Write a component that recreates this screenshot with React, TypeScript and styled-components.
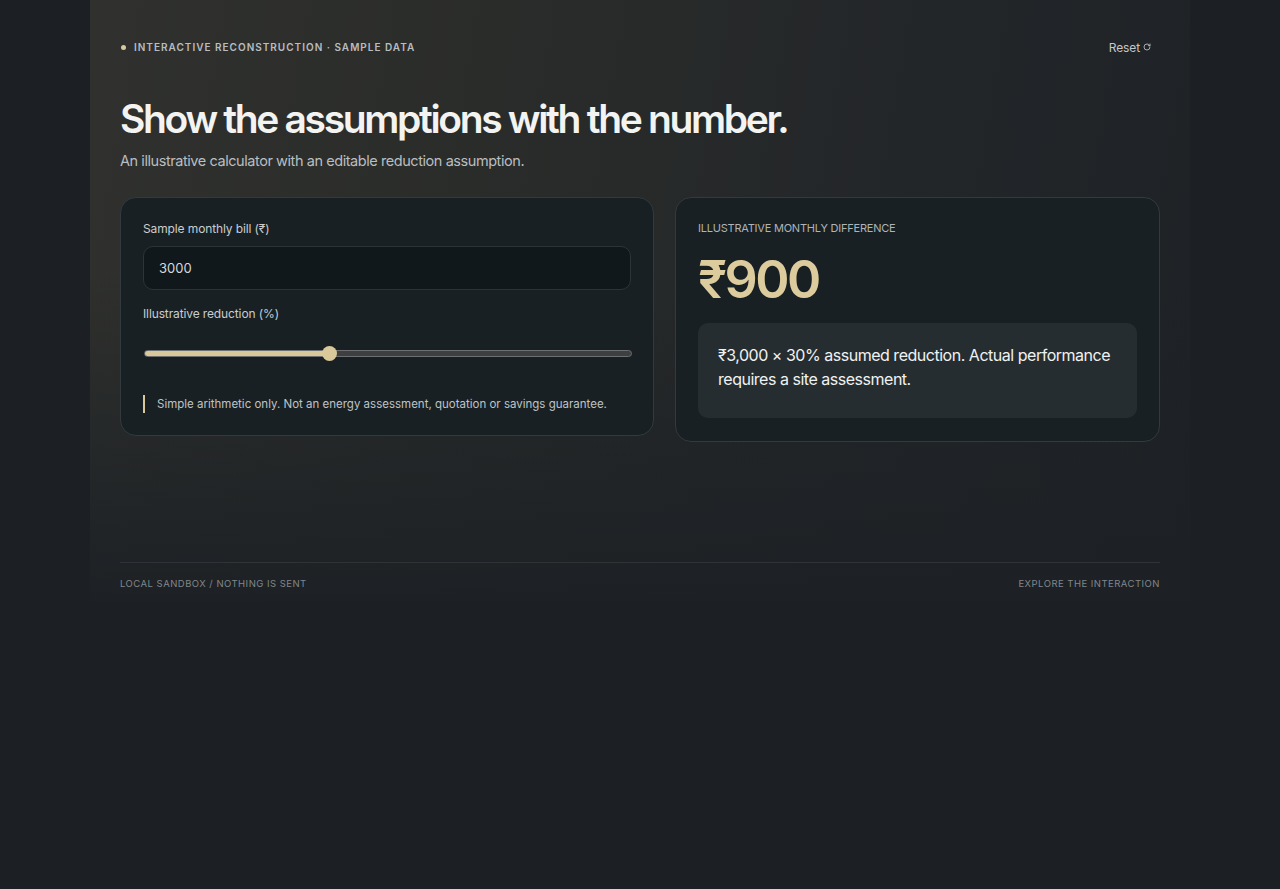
import { useState } from 'react';
import styled, { createGlobalStyle } from 'styled-components';
import { RotateCw } from 'lucide-react';

const GlobalStyles = createGlobalStyle`
  * { box-sizing: border-box; }
  html, body {
    margin: 0;
    background: #1c2024;
    font-family: Inter, "Noto Sans", sans-serif;
    color: #eef0f0;
  }
`;

const Page = styled.div`
  min-height: 889px;
  background: #1c2024;
`;

const Stage = styled.main`
  width: 1100px;
  margin-left: 90px;
  padding: 40px 30px 12px;
  background:
    linear-gradient(180deg, rgba(29, 33, 37, 0) 45%, #1d2125 100%),
    linear-gradient(100deg, #30312e 0%, #2a2c2a 35%, #232629 70%, #1e2226 100%);
  background-color: #1d2125;
`;

const TopBar = styled.header`
  display: flex;
  align-items: center;
  justify-content: space-between;
  height: 14px;
`;

const Eyebrow = styled.div`
  display: flex;
  align-items: center;
  gap: 8px;
  font-size: 10px;
  font-weight: 600;
  letter-spacing: 0.1em;
  text-transform: uppercase;
  color: #b9bdc0;
`;

const Dot = styled.span`
  width: 5px;
  height: 5px;
  margin-left: 1px;
  border-radius: 50%;
  background: #d9c99a;
`;

const ResetButton = styled.button`
  display: flex;
  align-items: center;
  gap: 3px;
  margin-right: 9px;
  padding: 0;
  border: 0;
  background: none;
  font-family: inherit;
  font-size: 12px;
  color: #c3c7ca;
  letter-spacing: -0.01em;
  cursor: pointer;
`;

const Title = styled.h1`
  margin: 41px 0 0;
  font-size: 39px;
  line-height: 48px;
  font-weight: 600;
  letter-spacing: -0.06em;
  color: #f3f3f1;
`;

const Lead = styled.p`
  margin: 8px 0 0;
  font-size: 14.5px;
  line-height: 20px;
  letter-spacing: -0.03em;
  color: #b9bec1;
`;

const Grid = styled.section`
  display: grid;
  grid-template-columns: 534px 485px;
  gap: 21px;
  align-items: start;
  margin-top: 26px;
`;

const Card = styled.div<{ $bottom: number }>`
  padding: 23px 22px ${(p) => p.$bottom}px;
  border: 1px solid #323a3d;
  border-radius: 16px;
  background: #192024;
`;

const FieldLabel = styled.label`
  display: block;
  font-size: 12px;
  line-height: 16px;
  letter-spacing: -0.01em;
  color: #c9cdcf;
`;

const NumberInput = styled.input`
  display: block;
  width: 100%;
  height: 44px;
  margin: 9px 0 16px;
  padding: 0 15px;
  border: 1px solid #2b3438;
  border-radius: 10px;
  background: #10181c;
  font-family: inherit;
  font-size: 13px;
  color: #d6dadc;
  outline: none;
`;

const Range = styled.input`
  -webkit-appearance: none;
  appearance: none;
  display: block;
  width: 488px;
  height: 7px;
  margin: 28px 0 0 1px;
  border-radius: 4px;
  border: 1px solid #6d6f70;
  outline: none;

  &::-webkit-slider-thumb {
    -webkit-appearance: none;
    width: 15px;
    height: 15px;
    border-radius: 50%;
    background: #d9c99a;
    border: 0;
    cursor: pointer;
  }
`;

const Note = styled.p`
  margin: 38px 0 0;
  padding: 1px 0 1px 12px;
  border-left: 2px solid #d9c99a;
  font-size: 11.5px;
  line-height: 16px;
  letter-spacing: 0;
  color: #bfc4c6;
`;

const ResultLabel = styled.div`
  font-size: 11px;
  line-height: 14px;
  letter-spacing: -0.02em;
  text-transform: uppercase;
  color: #aeb4b7;
`;

const Amount = styled.div`
  margin-top: 15px;
  font-size: 52px;
  line-height: 60px;
  font-weight: 600;
  letter-spacing: -0.05em;
  color: #dccb9c;
`;

const Explain = styled.div`
  margin-top: 13px;
  padding: 20px 16px 27px 20px;
  border-radius: 10px;
  background: #262d30;
  font-size: 16px;
  line-height: 24px;
  letter-spacing: -0.03em;
  color: #f0f2f2;
`;

const Footer = styled.footer`
  display: flex;
  justify-content: space-between;
  margin-top: 120px;
  padding-top: 15px;
  border-top: 1px solid #2d3337;
  font-size: 9.5px;
  letter-spacing: 0.05em;
  text-transform: uppercase;
  color: #80878b;
`;

const inr = (n: number) => '₹' + Math.round(n).toLocaleString('en-IN');

export default function App() {
  const [bill, setBill] = useState('3000');
  const [pct, setPct] = useState(30);

  const billNum = Number(bill) || 0;
  const fill = (pct / 80) * 100;

  return (
    <Page>
      <GlobalStyles />
      <Stage>
        <TopBar>
          <Eyebrow>
            <Dot />
            Interactive reconstruction · Sample data
          </Eyebrow>
          <ResetButton
            onClick={() => {
              setBill('3000');
              setPct(30);
            }}
          >
            Reset <RotateCw size={8} strokeWidth={2.5} />
          </ResetButton>
        </TopBar>

        <Title>Show the assumptions with the number.</Title>
        <Lead>An illustrative calculator with an editable reduction assumption.</Lead>

        <Grid>
          <Card $bottom={22}>
            <FieldLabel htmlFor="bill">Sample monthly bill (₹)</FieldLabel>
            <NumberInput id="bill" value={bill} onChange={(e) => setBill(e.target.value)} />
            <FieldLabel htmlFor="pct">Illustrative reduction (%)</FieldLabel>
            <Range
              id="pct"
              type="range"
              min={0}
              max={80}
              value={pct}
              onChange={(e) => setPct(Number(e.target.value))}
              style={{
                background: `linear-gradient(90deg, #d9c99a ${fill}%, #3d3f40 ${fill}%)`,
              }}
            />
            <Note>Simple arithmetic only. Not an energy assessment, quotation or savings guarantee.</Note>
          </Card>

          <Card $bottom={23}>
            <ResultLabel>Illustrative monthly difference</ResultLabel>
            <Amount>{inr((billNum * pct) / 100)}</Amount>
            <Explain>
              {inr(billNum)} × {pct}% assumed reduction. Actual performance requires a site assessment.
            </Explain>
          </Card>
        </Grid>

        <Footer>
          <span>Local sandbox / nothing is sent</span>
          <span>Explore the interaction</span>
        </Footer>
      </Stage>
    </Page>
  );
}
